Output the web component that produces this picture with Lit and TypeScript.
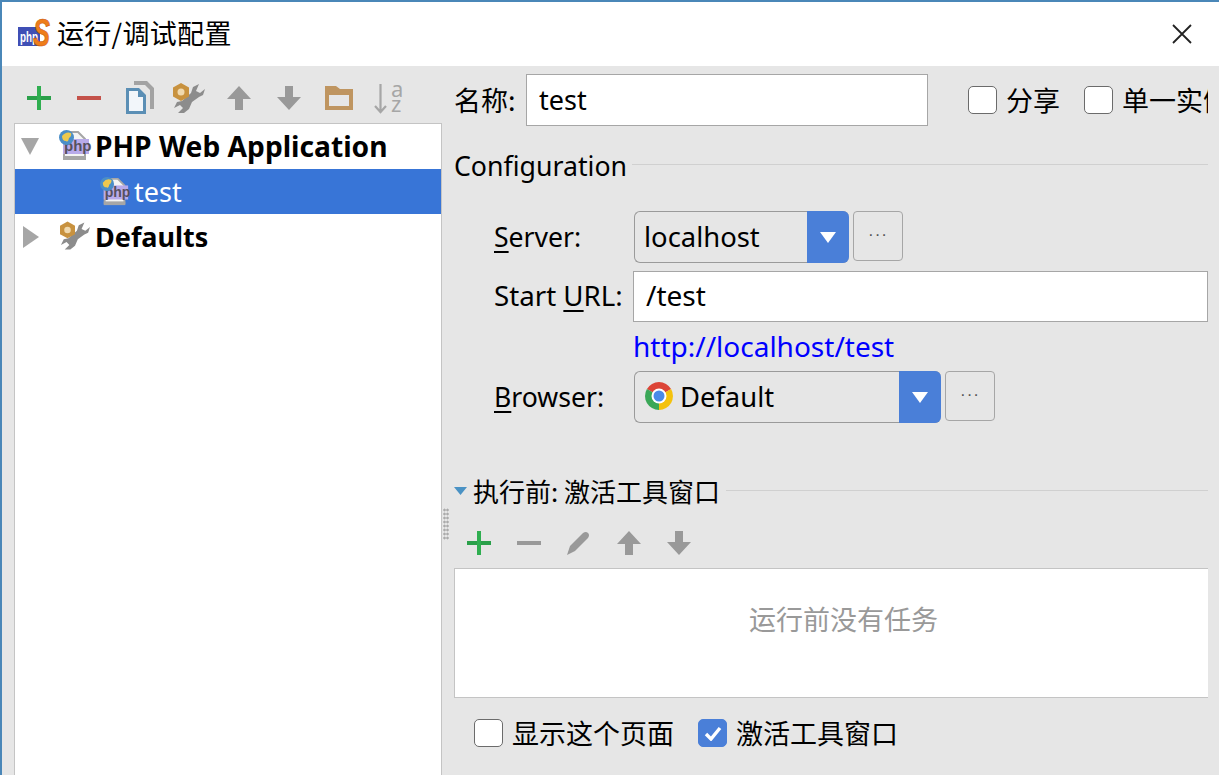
import { LitElement, html, css, svg } from 'lit';
import { customElement } from 'lit/decorators.js';

const plus = svg`<path d="M13 15h24v4H13z" fill="#2aa04a"/><path d="M23 5h4v24h-4z" fill="#2fae50"/>`;
const minus = (c: string) => svg`<path d="M13 15h24v4H13z" fill="${c}"/>`;
const up = svg`<path d="M25 5l12 13h-8v11h-8V18h-8z" fill="#999"/>`;
const down = svg`<path d="M21 5h8v11h8L25 29 13 16h8z" fill="#999"/>`;
const copy = svg`
  <path d="M20 0h13l7 7v21h-4V9l-5-5H20z" fill="#a3a3a3"/>
  <path d="M12 7h13l7 7v19H12z" fill="#5b8fb5"/>
  <path d="M15 10h9v6h5v14H15z" fill="#f2f6fa"/>`;
const wrench = svg`
  <path d="M35 3l-6 3-2 6-9 8-5 1-3 6 6-3 3 3-5 5h6l5-4 3-7 7-5 4-2 2-6-5 4-4-2z" fill="#8c8c8c"/>
  <path d="M17 2l8 4.5v9L17 20l-8-4.5v-9z" fill="#c8923f"/>
  <circle cx="17" cy="11" r="3.5" fill="#f0d9ae"/>`;
const folder = svg`<path fill-rule="evenodd" d="M11 5h11l4 3h13v21H11zM15 14v11h20V14z" fill="#bf9560"/>`;
const sort = svg`
  <path d="M16.5 3v28M11 25l5.5 6 5.5-6" fill="none" stroke="#a6a6a6" stroke-width="2.2"/>
  <text x="27" y="16" class="az">a</text><text x="27" y="31" class="az">z</text>`;
const pencil = svg`<path d="M13 29l3-9 13-13q3-2 5 0t0 5L21 25z" fill="#999"/>`;

const phpFile = html`<svg class="php-file" viewBox="0 0 32 32">
  <path d="M5 2h14l7 7v19H5z" fill="#f4f4f4" stroke="#a6a6a6" stroke-width="2"/>
  <path d="M4 26h23v4H4z" fill="#a6a6a6"/>
  <rect x="4" y="9" width="26" height="15" fill="#b8aaea"/>
  <text x="5" y="21" class="tag">php</text>
  <circle cx="7.5" cy="7.5" r="7.5" fill="#4a8ec8"/>
  <path d="M3 6q4-5 9-3 1 3-2 5-1 5-3 3-4 0-4-5z" fill="#eec94e"/>
</svg>`;

const arrow = html`<span class="arrow"><svg width="16" height="11" viewBox="0 0 16 11"><path d="M0 0h16L8 11z" fill="#fff"/></svg></span>`;

@customElement('app-root')
export class AppRoot extends LitElement {
  static styles = css`
    :host {
      display: block;
      width: 1219px;
      height: 775px;
      overflow: hidden;
      box-sizing: border-box;
      border-top: 2px solid #4a87b8;
      border-left: 2px solid #4a87b8;
      background: #e6e6e6;
      color: #000;
      font-family: 'Noto Sans', 'Noto Sans CJK SC', sans-serif;
      font-size: 27px;
    }
    .zh {
      font-family: 'Noto Sans CJK SC', sans-serif;
      font-size: 27px;
      padding-bottom: 2px;
    }
    .title {
      height: 64px;
      background: #fff;
      display: flex;
      align-items: center;
      padding: 0 27px 0 16px;
      gap: 7px;
    }
    .title .zh { padding-bottom: 4px; letter-spacing: 0.3px; }
    .logo { width: 32px; height: 32px; flex: none; overflow: visible; }
    .logo .p { font: bold 15px 'Liberation Sans', sans-serif; fill: #fff; }
    .logo .s { font: italic bold 38px 'Liberation Sans', sans-serif; fill: #ee7d1a; stroke: #c9560c; stroke-width: 0.6; }
    .close { margin-left: auto; width: 20px; height: 20px; }
    .body { display: flex; height: 709px; padding-right: 11px; }
    .left { width: 440px; flex: none; display: flex; flex-direction: column; box-sizing: border-box; padding-left: 12px; }
    .tools { display: flex; height: 57px; padding-top: 7px; box-sizing: border-box; align-items: center; }
    .tools svg { width: 50px; height: 34px; flex: none; overflow: visible; }
    .az { font: 22px 'Noto Sans', sans-serif; fill: #a6a6a6; }
    .tree {
      flex: 1;
      background: #fff;
      border: 1px solid #c4c4c4;
      border-bottom: 0;
    }
    .row { height: 45px; display: flex; align-items: center; font-weight: 700; box-sizing: border-box; }
    .row.app { font-size: 28.2px; padding-bottom: 1px; }
    .row .tri { width: 38px; margin-left: 6px; flex: none; display: flex; }
    .row .tree-icon { width: 36px; height: 32px; flex: none; }
    .php-file { width: 32px; height: 32px; flex: none; overflow: visible; }
    .tag { font: bold 15px 'Liberation Sans', sans-serif; fill: #55505e; }
    .row.sel { background: #3875d7; color: #fff; font-weight: 400; padding-left: 85px; gap: 4px; }
    .row.sel .php-file { width: 30px; height: 30px; }
    .right { flex: 1; min-width: 0; overflow: hidden; position: relative; padding-left: 12px; white-space: nowrap; }
    .grip {
      position: absolute;
      left: 1px;
      top: 442px;
      width: 6px;
      height: 32px;
      background-image: radial-gradient(#aaa 1px, transparent 1.2px);
      background-size: 3px 4px;
    }
    .name { display: flex; align-items: center; height: 52px; margin-top: 8px; }
    .name .lbl { width: 72px; flex: none; }
    .field {
      height: 52px;
      box-sizing: border-box;
      background: #fff;
      border: 1px solid #a6a6a6;
      display: flex;
      align-items: center;
      padding: 0 0 2px 12px;
    }
    .name .field { width: 402px; flex: none; margin-right: 40px; }
    .check { display: inline-flex; align-items: center; gap: 9px; flex: none; }
    .name .check { margin-right: 24px; }
    .box {
      width: 29px;
      height: 28px;
      box-sizing: border-box;
      background: #fff;
      border: 1px solid #6b6b6b;
      border-radius: 5px;
      flex: none;
    }
    .box.on {
      background: #4a7fd8;
      border-color: #4a7fd8;
      display: flex;
      align-items: center;
      justify-content: center;
    }
    .group { display: flex; align-items: center; height: 40px; gap: 5px; padding-bottom: 2px; box-sizing: border-box; font-size: 26.7px; }
    .group::after { content: ''; flex: 1; border-top: 1px solid #d0d0d0; margin-top: -2px; }
    .form {
      display: grid;
      grid-template-columns: 140px 1fr;
      margin: 25px 0 0 40px;
      align-items: center;
    }
    .form u { text-underline-offset: 4px; }
    .lab { font-size: 26.6px; }
    .lab.wide { font-size: 27.7px; }
    .combo {
      justify-self: start;
      height: 52px;
      box-sizing: border-box;
      display: flex;
      align-items: center;
      border: 1px solid #9a9a9a;
      border-right: 0;
      border-radius: 6px;
      padding: 0 0 2px 9px;
      font-size: 27.4px;
    }
    .combo-line { display: flex; align-items: flex-start; gap: 4px; }
    .arrow {
      margin-left: auto;
      align-self: stretch;
      width: 42px;
      margin-top: -1px;
      margin-bottom: -3px;
      background: #4a7fd8;
      border-radius: 0 6px 6px 0;
      display: flex;
      align-items: center;
      justify-content: center;
    }
    .dots {
      width: 50px;
      height: 50px;
      box-sizing: border-box;
      border: 1px solid #a6a6a6;
      border-radius: 4px;
      display: flex;
      align-items: center;
      justify-content: center;
      font: 17px 'Liberation Sans', sans-serif;
      letter-spacing: 1px;
      padding-bottom: 2px;
      color: #555;
    }
    .url { margin: 8px 0 0 -1px; height: 51px; font-size: 28px; padding-bottom: 4px; }
    .url-label { margin-top: 8px; padding-bottom: 4px; }
    .link { color: #00f; height: 49px; display: flex; align-items: center; font-size: 28px; padding-bottom: 2px; box-sizing: border-box; }
    .link-row { grid-column: 2; margin-left: -1px; }
    .chrome { width: 30px; height: 30px; margin-right: 6px; flex: none; }
    .before { margin-top: 48px; height: 40px; display: flex; align-items: center; gap: 6px; }
    .before::after { content: ''; flex: 1; border-top: 1px solid #d0d0d0; margin-top: -2px; }
    .before svg { flex: none; }
    .before .zh { font-size: 26px; }
    .tasks {
      height: 130px;
      box-sizing: border-box;
      background: #fff;
      border: 1px solid #c4c4c4;
      border-right: 0;
      display: flex;
      align-items: center;
      justify-content: center;
      color: #999;
      padding: 0 0 30px 24px;
    }
    .foot { display: flex; align-items: center; height: 70px; padding-left: 20px; gap: 24px; }
  `;

  render() {
    return html`
      <div class="title">
        <svg class="logo" viewBox="0 0 32 32">
          <rect x="0" y="9" width="22" height="19" fill="#3f4fb5"/>
          <text x="2" y="24" class="p" textLength="18" lengthAdjust="spacingAndGlyphs">php</text>
          <text x="15" y="28" class="s" textLength="17" lengthAdjust="spacingAndGlyphs">S</text>
        </svg>
        <span class="zh">运行/调试配置</span>
        <svg class="close" viewBox="0 0 20 20"><path d="M1 1l18 18M19 1L1 19" stroke="#222" stroke-width="1.8"/></svg>
      </div>
      <div class="body">
        <div class="left">
          <div class="tools">
            <svg viewBox="0 0 50 34">${plus}</svg>
            <svg viewBox="0 0 50 34">${minus('#c4524a')}</svg>
            <svg viewBox="0 0 50 34">${copy}</svg>
            <svg viewBox="0 0 50 34">${wrench}</svg>
            <svg viewBox="0 0 50 34">${up}</svg>
            <svg viewBox="0 0 50 34">${down}</svg>
            <svg viewBox="0 0 50 34">${folder}</svg>
            <svg viewBox="0 0 50 34">${sort}</svg>
          </div>
          <div class="tree">
            <div class="row app">
              <span class="tri"><svg width="18" height="17" viewBox="0 0 18 17"><path d="M0 0h18L9 17z" fill="#a6a6a6"/></svg></span>
              <span class="tree-icon">${phpFile}</span>
              PHP Web Application
            </div>
            <div class="row sel">${phpFile} test</div>
            <div class="row">
              <span class="tri"><svg style="margin-left:2px" width="16" height="22" viewBox="0 0 16 22"><path d="M0 0l16 11L0 22z" fill="#a6a6a6"/></svg></span>
              <span class="tree-icon"><svg style="margin-left:1px" width="30" height="30" viewBox="9 2 32 31">${wrench}</svg></span>
              Defaults
            </div>
          </div>
        </div>
        <div class="right">
          <div class="grip"></div>
          <div class="name">
            <span class="lbl zh">名称:</span>
            <div class="field">test</div>
            <span class="check"><span class="box"></span><span class="zh">分享</span></span>
            <span class="check"><span class="box"></span><span class="zh">单一实例</span></span>
          </div>
          <div class="group" style="margin-top:20px">Configuration</div>
          <div class="form">
            <span class="lab"><u>S</u>erver:</span>
            <div class="combo-line">
              <div class="combo" style="width:215px">localhost${arrow}</div>
              <div class="dots">···</div>
            </div>
            <span class="lab wide url-label">Start <u>U</u>RL:</span>
            <div class="field url">/test</div>
            <div class="link link-row">http://localhost/test</div>
            <span class="lab"><u>B</u>rowser:</span>
            <div class="combo-line">
              <div class="combo" style="width:307px">
                <svg class="chrome" viewBox="0 0 30 30">
                  <path d="M15 15L2.9 8A14 14 0 0 1 27.1 8Z" fill="#dc4437"/>
                  <path d="M15 15L27.1 8A14 14 0 0 1 15 29Z" fill="#f4c20d"/>
                  <path d="M15 15L15 29A14 14 0 0 1 2.9 8Z" fill="#3aa757"/>
                  <circle cx="15" cy="15" r="7.5" fill="#fff"/>
                  <circle cx="15" cy="15" r="5.5" fill="#4a8ae8"/>
                </svg>
                Default${arrow}
              </div>
              <div class="dots">···</div>
            </div>
          </div>
          <div class="before">
            <svg width="13" height="8" viewBox="0 0 13 8"><path d="M0 0h13L6.5 8z" fill="#4a92c4"/></svg>
            <span class="zh">执行前: 激活工具窗口</span>
          </div>
          <div class="tools">
            <svg viewBox="0 0 50 34">${plus}</svg>
            <svg viewBox="0 0 50 34">${minus('#999')}</svg>
            <svg viewBox="0 0 50 34">${pencil}</svg>
            <svg viewBox="0 0 50 34">${up}</svg>
            <svg viewBox="0 0 50 34">${down}</svg>
          </div>
          <div class="tasks zh">运行前没有任务</div>
          <div class="foot">
            <span class="check"><span class="box"></span><span class="zh">显示这个页面</span></span>
            <span class="check">
              <span class="box on"><svg width="18" height="15" viewBox="0 0 18 15"><path d="M2 8l5 5 9-11" fill="none" stroke="#fff" stroke-width="3.4"/></svg></span>
              <span class="zh">激活工具窗口</span>
            </span>
          </div>
        </div>
      </div>
    `;
  }
}
